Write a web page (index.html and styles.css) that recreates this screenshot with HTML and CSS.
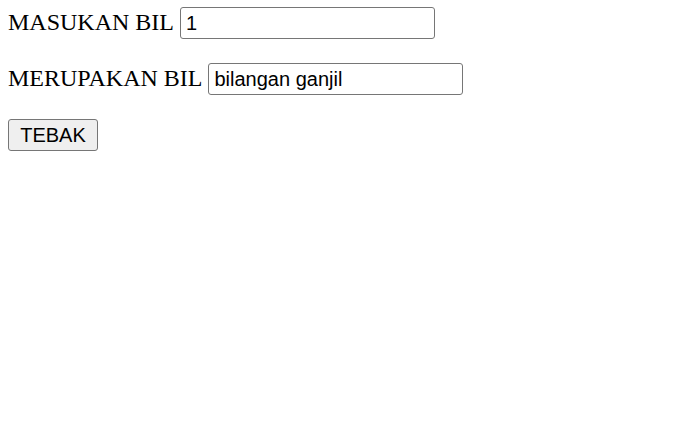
FILE: index.html
```html
<!DOCTYPE html>
<html>
<head>
<meta charset="utf-8">
<link rel="stylesheet" href="styles.css">
</head>
<body>
<form class="form">
  <div class="row">
    <label class="label" for="bil">MASUKAN BIL</label>
    <input class="field" id="bil" type="text" value="1">
  </div>
  <div class="row">
    <label class="label" for="hasil">MERUPAKAN BIL</label>
    <input class="field" id="hasil" type="text" value="bilangan ganjil">
  </div>
  <div class="row">
    <button class="btn" type="button">TEBAK</button>
  </div>
</form>
</body>
</html>
```
FILE: styles.css
```css
html, body {
  background: #fff;
}
body {
  margin: 0;
  padding: 7px 8px;
  font-family: "Liberation Serif", "Times New Roman", serif;
  font-size: 24px;
  color: #000;
}
.form {
  display: flex;
  flex-direction: column;
  gap: 24px;
  margin: 0;
}
.row {
  display: flex;
  align-items: center;
  height: 32px;
}
.label {
  margin-right: 6px;
  line-height: 32px;
  white-space: nowrap;
  position: relative;
  top: -1px;
}
.field {
  box-sizing: border-box;
  width: 255px;
  height: 32px;
  margin: 0;
  padding: 1px 4px 0 5px;
  border: 1px solid #767676;
  border-radius: 3px;
  font-family: "Liberation Sans", Arial, sans-serif;
  font-size: 20px;
  color: #000;
  background: #fff;
  outline: none;
}
.btn {
  box-sizing: border-box;
  width: 90px;
  height: 32px;
  margin: 0;
  padding: 0;
  border: 1px solid #767676;
  border-radius: 3px;
  background: #efefef;
  font-family: "Liberation Sans", Arial, sans-serif;
  font-size: 20px;
  color: #000;
}
```
